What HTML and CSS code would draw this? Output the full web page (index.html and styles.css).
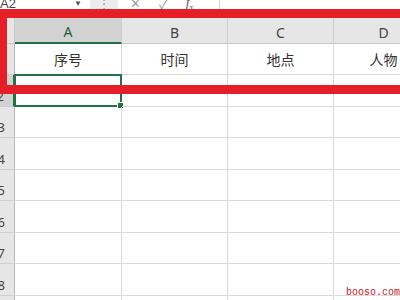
FILE: index.html
```html
<!DOCTYPE html>
<html lang="zh-CN">
<head>
    <meta charset="UTF-8">
    <title>Sheet</title>
    <link rel="stylesheet" href="styles.css">
</head>
<body>
    <div class="formula-bar">
        <div class="name-box">A2<span class="drop">&#9660;</span></div>
        <div class="grip">&#8942;</div>
        <div class="buttons">
            <span class="btn">&#10005;</span>
            <span class="btn">&#10003;</span>
            <span class="btn fx"><i>f</i><sub>x</sub></span>
        </div>
        <div class="formula-input"></div>
    </div>

    <div class="sheet">
        <div class="corner"></div>
        <div class="col-head active">A</div>
        <div class="col-head">B</div>
        <div class="col-head">C</div>
        <div class="col-head">D</div>

        <div class="row-head">1</div>
        <div class="cell">序号</div>
        <div class="cell">时间</div>
        <div class="cell">地点</div>
        <div class="cell">人物</div>

        <div class="row-head active">2</div>
        <div class="cell selected"><span class="handle"></span></div>
        <div class="cell"></div>
        <div class="cell"></div>
        <div class="cell"></div>

        <div class="row-head">3</div>
        <div class="cell"></div><div class="cell"></div><div class="cell"></div><div class="cell"></div>
        <div class="row-head">4</div>
        <div class="cell"></div><div class="cell"></div><div class="cell"></div><div class="cell"></div>
        <div class="row-head">5</div>
        <div class="cell"></div><div class="cell"></div><div class="cell"></div><div class="cell"></div>
        <div class="row-head">6</div>
        <div class="cell"></div><div class="cell"></div><div class="cell"></div><div class="cell"></div>
        <div class="row-head">7</div>
        <div class="cell"></div><div class="cell"></div><div class="cell"></div><div class="cell"></div>
        <div class="row-head">8</div>
        <div class="cell"></div><div class="cell"></div><div class="cell"></div><div class="cell"></div>
        <div class="row-head">9</div>
        <div class="cell"></div><div class="cell"></div><div class="cell"></div><div class="cell"></div>
    </div>

    <!-- red annotation box drawn over the header rows -->
    <div class="mark"></div>
    <div class="watermark">booso.com</div>
</body>
</html>
```

FILE: styles.css
```css
html, body{
    margin: 0;
    width: 400px;
    height: 300px;
    overflow: hidden;
    background: #ffffff;
    font-family: "Noto Sans", "Noto Sans CJK SC", sans-serif;
}
.formula-bar{
    display: flex;
    height: 18px;
    margin-top: -6px;
    margin-bottom: 6px;
    background: #ffffff;
    color: #444444;
    font-size: 13px;
}
.name-box{
    width: 90px;
    display: flex;
    align-items: center;
    justify-content: space-between;
    padding-right: 8px;
    box-sizing: border-box;
    font-family: "Liberation Sans", sans-serif;
}
.drop{
    font-size: 8px;
    color: #555555;
}
.grip{
    width: 28px;
    background: #ececec;
    color: #999999;
    display: flex;
    align-items: center;
    justify-content: center;
    font-size: 12px;
}
.buttons{
    width: 102px;
    display: flex;
    align-items: center;
    padding-left: 12px;
    gap: 18px;
    box-sizing: border-box;
    border-right: 1px solid #d4d4d4;
    color: #a0a0a0;
}
.btn{
    font-size: 13px;
}
.fx{
    color: #555555;
    font-family: "Liberation Serif", serif;
    font-size: 13px;
}
.fx sub{
    font-size: 8px;
}
.formula-input{
    flex: 1;
}

.sheet{
    display: grid;
    grid-template-columns: 15px 107px 106px 106px 100px;
    grid-template-rows: 26px 31px 32px 31px 32px 31px 32px 31px 32px 31px;
}
.corner, .col-head, .row-head{
    background: #e6e6e6;
    color: #444444;
    box-sizing: border-box;
}
.corner{
    border-right: 1px solid #c8c8c8;
    border-bottom: 1px solid #c8c8c8;
}
.col-head{
    display: flex;
    align-items: flex-end;
    justify-content: center;
    padding-bottom: 1px;
    font-size: 14px;
    border-right: 1px solid #cfcfcf;
    border-bottom: 1px solid #c8c8c8;
}
.col-head.active{
    background: #d2d2d2;
    color: #1e5e3a;
    border-bottom: 2px solid #217346;
}
.row-head{
    display: flex;
    align-items: flex-end;
    justify-content: flex-end;
    padding-right: 9px;
    padding-bottom: 1px;
    overflow: hidden;
    font-size: 13px;
    border-right: 1px solid #b8b8b8;
    border-bottom: 1px solid #cfcfcf;
}
.row-head.active{
    background: #d2d2d2;
    border-right: 2px solid #217346;
}
.cell{
    position: relative;
    box-sizing: border-box;
    border-right: 1px solid #dadada;
    border-bottom: 1px solid #dadada;
    display: flex;
    align-items: center;
    justify-content: center;
    font-size: 14px;
    color: #333333;
}
.cell.selected{
    border: 2px solid #217346;
    margin: -1px 0 0 -1px;
}
.handle{
    position: absolute;
    right: -4px;
    bottom: -4px;
    width: 5px;
    height: 5px;
    background: #217346;
    border: 1px solid #ffffff;
}

.mark{
    position: absolute;
    left: -20px;
    top: 9px;
    width: 440px;
    height: 85px;
    box-sizing: border-box;
    border: 9px solid #e61e28;
    border-left-width: 27px;
}
.watermark{
    position: absolute;
    right: 0;
    bottom: 2px;
    font-family: "Liberation Mono", monospace;
    font-size: 10px;
    color: #cc1122;
}
```
